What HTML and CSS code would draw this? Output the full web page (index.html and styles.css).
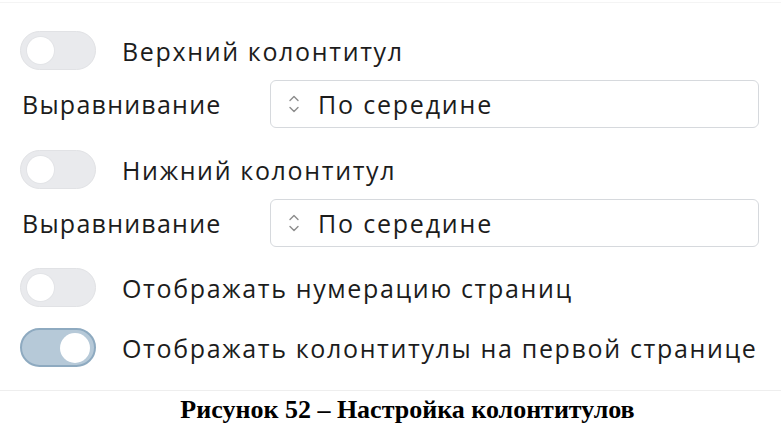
FILE: index.html
```html
<!DOCTYPE html>
<html lang="ru">
<head>
<meta charset="utf-8">
<link rel="stylesheet" href="styles.css">
</head>
<body>
<div class="panel">
  <div class="group">
    <div class="toggle-row">
      <span class="switch"><span class="knob"></span></span>
      <span class="label">Верхний колонтитул</span>
    </div>
    <div class="field-row">
      <span class="field-label">Выравнивание</span>
      <div class="select">
        <svg class="chev" width="12" height="20" viewBox="0 0 12 20"><path d="M2 6.5 L6 2.5 L10 6.5" fill="none" stroke="#8c8c8c" stroke-width="1.4" stroke-linecap="round" stroke-linejoin="round"/><path d="M2 13.5 L6 17.5 L10 13.5" fill="none" stroke="#8c8c8c" stroke-width="1.4" stroke-linecap="round" stroke-linejoin="round"/></svg>
        <span class="value">По середине</span>
      </div>
    </div>
  </div>
  <div class="group">
    <div class="toggle-row">
      <span class="switch"><span class="knob"></span></span>
      <span class="label">Нижний колонтитул</span>
    </div>
    <div class="field-row">
      <span class="field-label">Выравнивание</span>
      <div class="select">
        <svg class="chev" width="12" height="20" viewBox="0 0 12 20"><path d="M2 6.5 L6 2.5 L10 6.5" fill="none" stroke="#8c8c8c" stroke-width="1.4" stroke-linecap="round" stroke-linejoin="round"/><path d="M2 13.5 L6 17.5 L10 13.5" fill="none" stroke="#8c8c8c" stroke-width="1.4" stroke-linecap="round" stroke-linejoin="round"/></svg>
        <span class="value">По середине</span>
      </div>
    </div>
  </div>
  <div class="toggle-row">
    <span class="switch"><span class="knob"></span></span>
    <span class="label">Отображать нумерацию страниц</span>
  </div>
  <div class="toggle-row">
    <span class="switch on"><span class="knob"></span></span>
    <span class="label">Отображать колонтитулы на первой странице</span>
  </div>
</div>
<p class="caption">Рисунок 52 – Настройка колонтитулов</p>
</body>
</html>
```
FILE: styles.css
```css
html, body {
  margin: 0;
  padding: 0;
  background: #ffffff;
}
body {
  padding-top: 2px;
  font-family: "Open Sans", "Noto Sans", sans-serif;
  color: #1c1c1c;
}
.panel {
  border-top: 1px solid #f4f4f4;
  border-bottom: 1px solid #eeeeee;
  padding: 28px 22px 23px 20px;
  display: flex;
  flex-direction: column;
  gap: 21px;
}
.group {
  display: flex;
  flex-direction: column;
  gap: 10px;
}
.group + .group {
  margin-top: 1px;
}
.toggle-row {
  display: flex;
  align-items: center;
  height: 39px;
}
.switch {
  box-sizing: border-box;
  width: 76px;
  height: 39px;
  border-radius: 20px;
  background: #e9eaed;
  border: 1px solid #e1e2e5;
  display: flex;
  align-items: center;
  padding: 0 6px;
  flex: none;
}
.knob {
  width: 27px;
  height: 27px;
  border-radius: 50%;
  background: #ffffff;
  box-shadow: 0 0 0 1px #e3e4e7;
}
.switch.on {
  background: #b6c9d8;
  border: 2px solid #8eaac0;
  justify-content: flex-end;
  padding: 0 4px;
}
.switch.on .knob {
  width: 30px;
  height: 30px;
  box-shadow: none;
}
.label {
  margin-left: 26px;
  font-size: 25px;
  line-height: 30px;
  letter-spacing: 1.65px;
}
.field-row {
  display: grid;
  grid-template-columns: 250px 1fr;
  align-items: center;
}
.field-label {
  padding-left: 2px;
  font-size: 25px;
  line-height: 30px;
  letter-spacing: 1.25px;
}
.select {
  box-sizing: border-box;
  height: 48px;
  border: 1.5px solid #d6d9dd;
  border-radius: 6px;
  display: flex;
  align-items: center;
  padding-left: 17px;
}
.chev {
  flex: none;
}
.value {
  margin-left: 18px;
  font-size: 25px;
  line-height: 30px;
  letter-spacing: 1.8px;
}
.caption {
  margin: 4px 0 0 0;
  padding-left: 34px;
  text-align: center;
  font-family: "Liberation Serif", "Times New Roman", serif;
  font-weight: bold;
  font-size: 26px;
  line-height: 30px;
  color: #000000;
}
```
